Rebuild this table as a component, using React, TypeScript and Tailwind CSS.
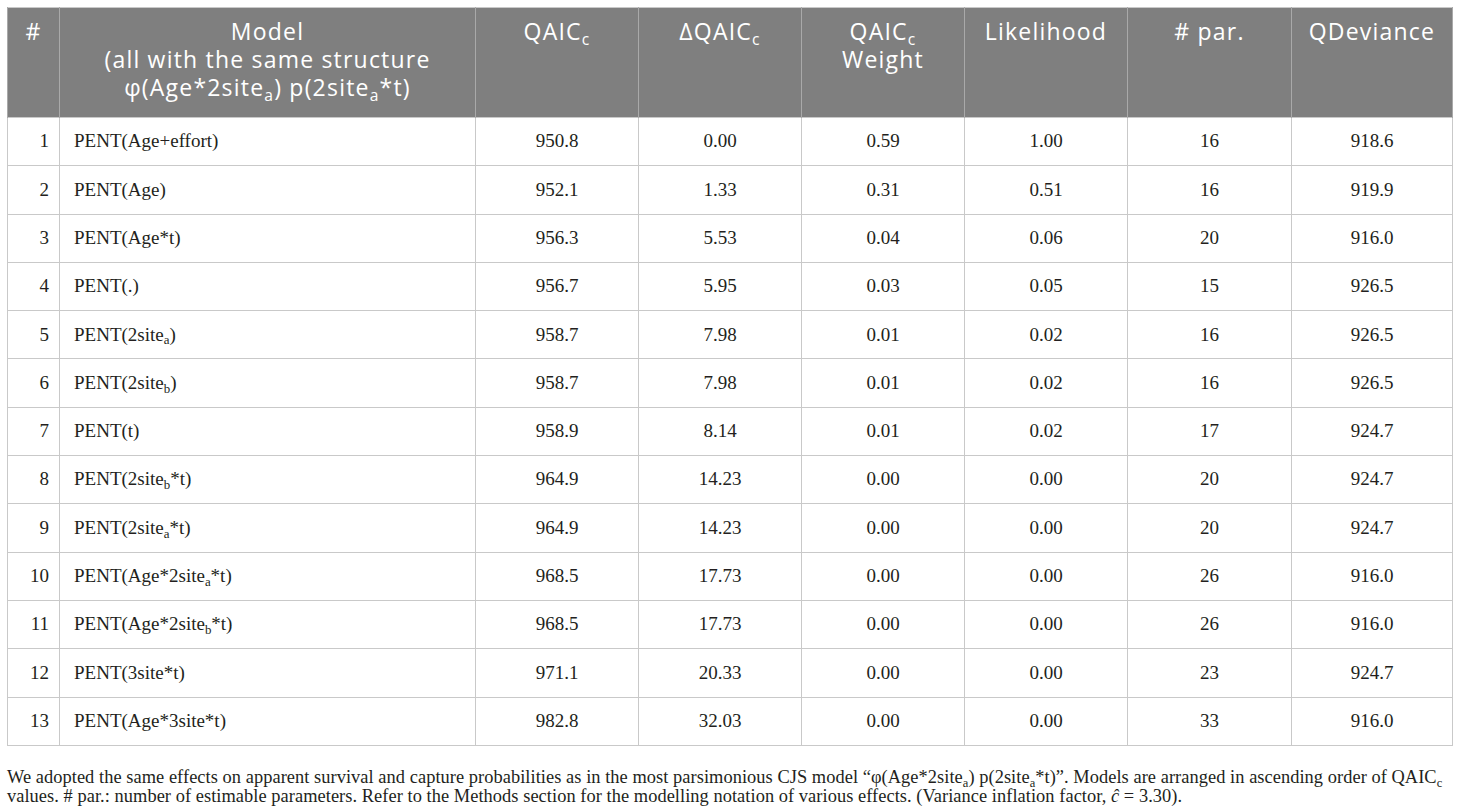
const ROWS: [string, React.ReactNode, string, string, string, string, string, string][] = [
  ["1", "PENT(Age+effort)", "950.8", "0.00", "0.59", "1.00", "16", "918.6"],
  ["2", "PENT(Age)", "952.1", "1.33", "0.31", "0.51", "16", "919.9"],
  ["3", "PENT(Age*t)", "956.3", "5.53", "0.04", "0.06", "20", "916.0"],
  ["4", "PENT(.)", "956.7", "5.95", "0.03", "0.05", "15", "926.5"],
  ["5", <>PENT(2site<Sub>a</Sub>)</>, "958.7", "7.98", "0.01", "0.02", "16", "926.5"],
  ["6", <>PENT(2site<Sub>b</Sub>)</>, "958.7", "7.98", "0.01", "0.02", "16", "926.5"],
  ["7", "PENT(t)", "958.9", "8.14", "0.01", "0.02", "17", "924.7"],
  ["8", <>PENT(2site<Sub>b</Sub>*t)</>, "964.9", "14.23", "0.00", "0.00", "20", "924.7"],
  ["9", <>PENT(2site<Sub>a</Sub>*t)</>, "964.9", "14.23", "0.00", "0.00", "20", "924.7"],
  ["10", <>PENT(Age*2site<Sub>a</Sub>*t)</>, "968.5", "17.73", "0.00", "0.00", "26", "916.0"],
  ["11", <>PENT(Age*2site<Sub>b</Sub>*t)</>, "968.5", "17.73", "0.00", "0.00", "26", "916.0"],
  ["12", "PENT(3site*t)", "971.1", "20.33", "0.00", "0.00", "23", "924.7"],
  ["13", "PENT(Age*3site*t)", "982.8", "32.03", "0.00", "0.00", "33", "916.0"],
];

const WIDTHS = ["w-[52px]", "w-[416px]", "w-[163px]", "w-[163px]", "w-[163px]", "w-[163px]", "w-[164px]", "w-[161px]"];

function Sub({ children }: { children: React.ReactNode }) {
  return <sub className="text-[0.68em] align-baseline relative top-[0.3em]">{children}</sub>;
}

export default function App() {
  const th = "border-x border-[#a9a9a9] align-top font-normal pt-[9px] leading-[28px]";
  const td = "border border-[#c9c9c9] h-[48.3px] p-0 text-center";

  return (
    <div className="bg-white w-[1460px] h-[807px] pt-[7px] pl-[7px]">
      <table className="border-collapse table-fixed w-[1446px] border border-[#c9c9c9]">
        <colgroup>
          {WIDTHS.map((w, i) => (
            <col key={i} className={w} />
          ))}
        </colgroup>
        <thead>
          <tr className="bg-[#7f7f7f] text-white text-[23px] tracking-[1.2px] h-[110px] font-['Open_Sans',sans-serif]">
            <th className={th}>#</th>
            <th className={th}>
              Model
              <br />
              (all with the same structure
              <br />
              φ(Age*2site<Sub>a</Sub>) p(2site<Sub>a</Sub>*t)
            </th>
            <th className={th}>
              QAIC<Sub>c</Sub>
            </th>
            <th className={th}>
              ΔQAIC<Sub>c</Sub>
            </th>
            <th className={th}>
              QAIC<Sub>c</Sub>
              <br />
              Weight
            </th>
            <th className={th}>Likelihood</th>
            <th className={th}># par.</th>
            <th className={th}>QDeviance</th>
          </tr>
        </thead>
        <tbody className="font-['Liberation_Serif',serif] text-[19px] text-[#231f20]">
          {ROWS.map((r) => (
            <tr key={r[0]}>
              <td className={`${td} !text-right pr-[10px]`}>{r[0]}</td>
              <td className={`${td} !text-left pl-[14px]`}>{r[1]}</td>
              {r.slice(2).map((v, i) => (
                <td key={i} className={td}>
                  {v}
                </td>
              ))}
            </tr>
          ))}
        </tbody>
      </table>
      <p className="font-['Liberation_Serif',serif] text-[18.4px] leading-[19px] text-[#231f20] mt-[22px] w-[1446px] tracking-[0.05px]">
        We adopted the same effects on apparent survival and capture probabilities as in the most parsimonious CJS model
        “φ(Age*2site<Sub>a</Sub>) p(2site<Sub>a</Sub>*t)”. Models are arranged in ascending order of QAIC<Sub>c</Sub>{" "}
        values. # par.: number of estimable parameters. Refer to the Methods section for the modelling notation of various
        effects. (Variance inflation factor, <i>ĉ</i> = 3.30).
      </p>
    </div>
  );
}
